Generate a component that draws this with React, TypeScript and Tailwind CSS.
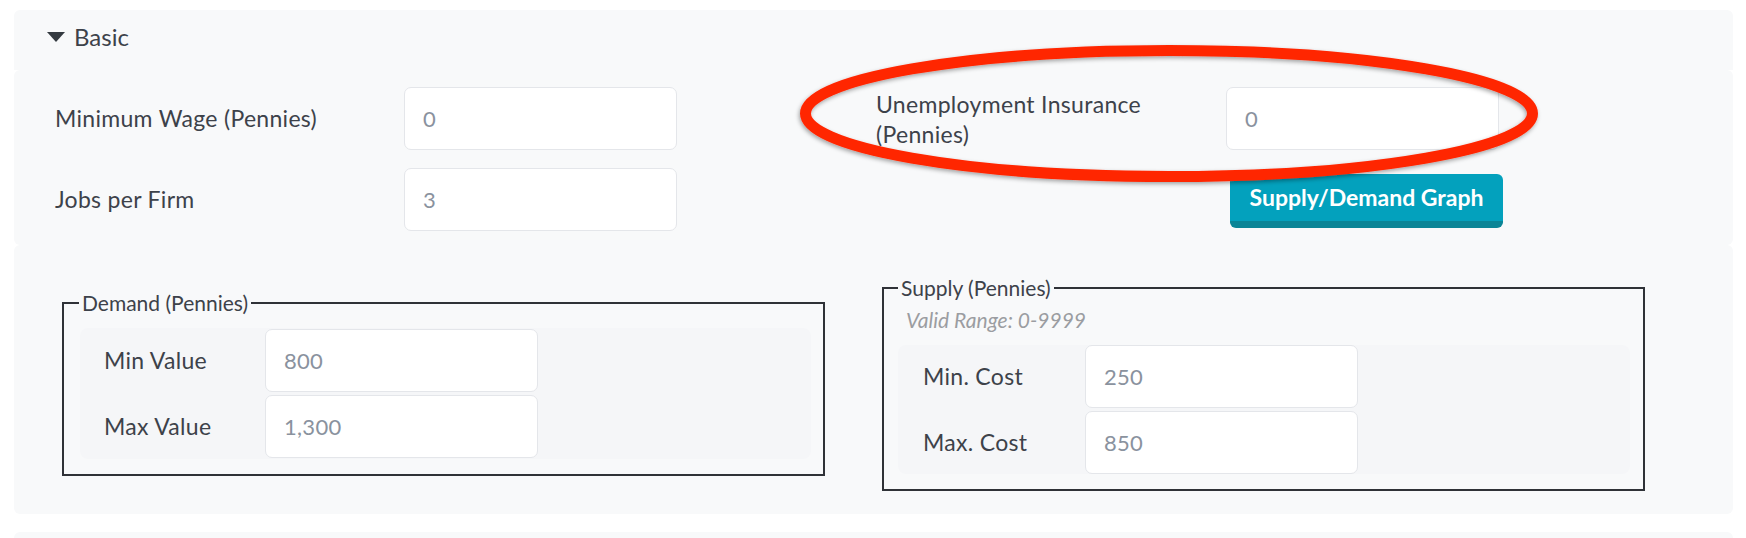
import React from 'react';

const font = { fontFamily: 'Lato, "Open Sans", sans-serif' };

function TextBox({ value, className = '' }: { value: string; className?: string }) {
  return (
    <div
      className={`flex items-center h-[63px] w-[273px] rounded-[7px] border-[1.5px] border-[#e4e6ea] bg-white pl-[18px] text-[22px] tracking-[0.3px] text-[#8a929e] ${className}`}
    >
      {value}
    </div>
  );
}

function FieldRow({ label, value, labelWidth, inputWidth }: { label: string; value: string; labelWidth: string; inputWidth: string }) {
  return (
    <div className="flex items-center">
      <div className={`${labelWidth} text-[23px] tracking-[0.3px] text-[#3d424a]`}>{label}</div>
      <TextBox value={value} className={inputWidth} />
    </div>
  );
}

function App() {
  return (
    <div className="relative bg-white min-h-[538px] pt-[10px] px-[14px]" style={font}>
      <div className="w-[1719px] flex flex-col">
        {/* header */}
        <div className="h-[60px] rounded-t-[6px] bg-[#f8f9fa] pt-[13px] pl-[33px]">
          <div className="flex items-center gap-[9px] leading-[28px]">
            <svg width="18" height="10" viewBox="0 0 18 10">
              <polygon points="0,0 18,0 9,10" fill="#343a40" />
            </svg>
            <span className="text-[24px] text-[#3d424a]">Basic</span>
          </div>
        </div>

        {/* top inputs */}
        <div className="h-[175px] rounded-[6px] bg-[#f8f9fa] pt-[17px] pl-[41px] flex">
          <div className="w-[821px] flex flex-col gap-[18px]">
            <div className="h-[63px] flex items-center">
              <div className="w-[349px] text-[23px] tracking-[0.3px] text-[#3d424a]">Minimum Wage (Pennies)</div>
              <TextBox value="0" />
            </div>
            <div className="h-[63px] flex items-center">
              <div className="w-[349px] text-[23px] tracking-[0.3px] text-[#3d424a]">Jobs per Firm</div>
              <TextBox value="3" />
            </div>
          </div>
          <div className="flex flex-col gap-[18px]">
            <div className="h-[63px] flex items-center">
              <div className="w-[350px] pr-[30px] text-[23px] tracking-[0.3px] leading-[30px] text-[#3d424a]">Unemployment Insurance (Pennies)</div>
              <TextBox value="0" className="w-[271px]" />
            </div>
            <div className="h-[63px] flex items-center">
              <button className="ml-[354px] mt-[3px] h-[54px] w-[273px] rounded-[6px] bg-[#03a1bd] border-b-[7px] border-[#0b8596] text-[23px] font-bold text-white">
                Supply/Demand Graph
              </button>
            </div>
          </div>
        </div>

        {/* demand / supply */}
        <div className="rounded-[6px] bg-[#f8f9fa] pt-[31px] pb-[23px] pl-[48px] flex items-center gap-[57px]">
          <fieldset className="w-[763px] border-2 border-[#2f3237] pl-[16px] pr-[12px] pt-[13px] pb-[15px]">
            <legend className="-ml-[1px] px-[3px] text-[21px] leading-[24px] text-[#3d424a]">Demand (Pennies)</legend>
            <div className="rounded-[8px] bg-[#f5f6f8] py-[1px] flex flex-col gap-[3px]">
              <FieldRow label="Min Value" value="800" labelWidth="w-[185px] pl-[24px]" inputWidth="w-[270px]" />
              <FieldRow label="Max Value" value="1,300" labelWidth="w-[185px] pl-[24px]" inputWidth="w-[270px]" />
            </div>
          </fieldset>

          <fieldset className="w-[763px] border-2 border-[#2f3237] pl-[14px] pr-[13px] pt-[8px] pb-[15px]">
            <legend className="px-[3px] text-[21px] leading-[24px] text-[#3d424a]">Supply (Pennies)</legend>
            <div className="pl-[8px] text-[21px] leading-[24px] italic text-[#9b9da1]">Valid Range: 0-9999</div>
            <div className="mt-[13px] rounded-[8px] bg-[#f5f6f8] flex flex-col gap-[3px]">
              <FieldRow label="Min. Cost" value="250" labelWidth="w-[187px] pl-[25px]" inputWidth="w-[270px] h-[62px]" />
              <FieldRow label="Max. Cost" value="850" labelWidth="w-[187px] pl-[25px]" inputWidth="w-[270px] h-[62px]" />
            </div>
          </fieldset>
        </div>

        {/* next panel peeking in */}
        <div className="mt-[18px] h-[20px] rounded-t-[6px] bg-[#f8f9fa]" />
      </div>

      {/* red annotation ring */}
      <svg className="absolute left-[790px] top-[35px] pointer-events-none" width="760" height="160" viewBox="0 0 760 160">
        <defs>
          <filter id="ringShadow" x="-5%" y="-20%" width="110%" height="140%">
            <feDropShadow dx="-1" dy="2" stdDeviation="2" floodColor="#000" floodOpacity="0.35" />
          </filter>
        </defs>
        <ellipse cx="379" cy="78.5" rx="363.5" ry="63" fill="none" stroke="#ff2600" strokeWidth="11" filter="url(#ringShadow)" />
      </svg>
    </div>
  );
}

export default App;
